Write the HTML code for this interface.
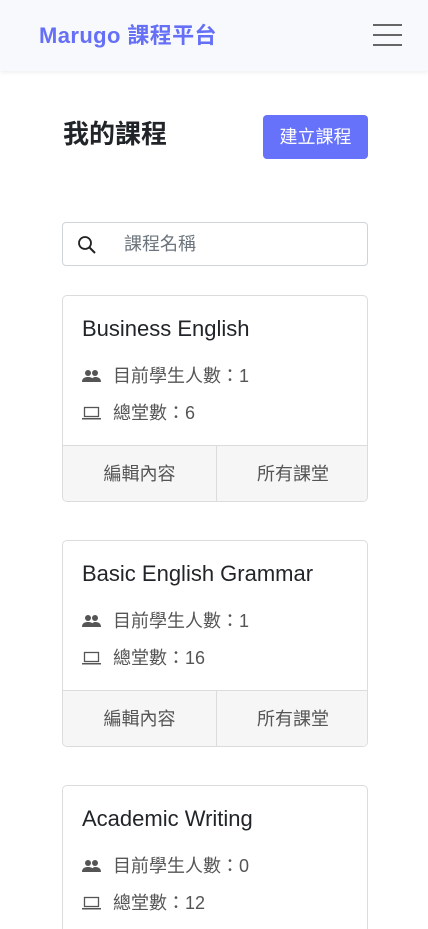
<!DOCTYPE html>
<html><head><meta charset="utf-8">
<style>
*{box-sizing:border-box;margin:0;padding:0}
html,body{width:428px;height:929px;overflow:hidden}
body{background:#fff;font-family:"Liberation Sans","Noto Sans CJK TC",sans-serif;color:#212529;position:relative}
.hdr{position:absolute;left:0;top:0;width:428px;height:71px;background:#f8f9fd;box-shadow:0 2px 4px rgba(0,0,0,.06)}
.brand{position:absolute;left:39px;top:21px;font-size:22px;font-weight:bold;color:#6570f6;line-height:30px;letter-spacing:0.4px}
.ham{position:absolute;left:373px;width:29px;height:2px;background:#666}
h1{position:absolute;left:63px;top:117px;font-size:26px;font-weight:bold;line-height:34px}
.btn{position:absolute;left:263px;top:115px;width:105px;height:44px;background:#6672fa;border-radius:4px;color:#fff;font-size:18px;text-align:center;line-height:44px}
.search{position:absolute;left:62px;top:222px;width:306px;height:44px;border:1px solid #ced4da;border-radius:4px}
.search span{position:absolute;left:61px;top:0;line-height:42px;font-size:18px;color:#6c757d}
.card{position:absolute;left:62px;width:306px;height:207px;border:1px solid #dcdcdc;border-radius:5px;overflow:hidden}
.card .t{position:absolute;left:19px;top:18px;font-size:22px;line-height:30px}
.row{position:absolute;left:19px;font-size:18px;color:#555;line-height:24px}
.row svg{position:absolute;left:0;top:4px}
.row b{font-weight:normal;margin-left:31px}
.foot{position:absolute;left:0;top:149px;width:306px;height:58px;background:#f6f6f6;border-top:1px solid #dcdcdc;font-size:18px;color:#555}
.foot div{position:absolute;top:0;width:153px;text-align:center;line-height:56px}
.foot .r{left:153px;border-left:1px solid #dcdcdc}
</style></head><body>
<div class="hdr">
<div class="brand">Marugo 課程平台</div>
<div class="ham" style="top:24px"></div><div class="ham" style="top:34px"></div><div class="ham" style="top:44px"></div>
</div>
<h1>我的課程</h1>
<div class="btn">建立課程</div>
<div class="search">
<svg style="position:absolute;left:14px;top:12px" width="20" height="20" viewBox="0 0 20 20"><circle cx="8" cy="8" r="6" fill="none" stroke="#222" stroke-width="1.8"/><line x1="12.5" y1="12.5" x2="18" y2="18" stroke="#222" stroke-width="2"/></svg>
<span>課程名稱</span></div>

<div class="card" style="top:295px">
<div class="t">Business English</div>
<div class="row" style="top:68px"><svg width="19" height="16" viewBox="0 0 19 16"><circle cx="6" cy="5" r="3" fill="#555"/><circle cx="13" cy="5" r="3" fill="#555"/><path d="M0 14c0-4 3-5 6-5s6 1 6 5zM9 14c0-4 3-5 4-5 3 0 6 1 6 5z" fill="#555"/></svg><b>目前學生人數：1</b></div>
<div class="row" style="top:105px"><svg width="19" height="16" viewBox="0 0 19 16"><rect x="2.5" y="2.5" width="14" height="9" fill="none" stroke="#555" stroke-width="1.3"/><rect x="0" y="13" width="19" height="1.5" fill="#555"/></svg><b>總堂數：6</b></div>
<div class="foot"><div>編輯內容</div><div class="r">所有課堂</div></div>
</div>

<div class="card" style="top:540px">
<div class="t">Basic English Grammar</div>
<div class="row" style="top:68px"><svg width="19" height="16" viewBox="0 0 19 16"><circle cx="6" cy="5" r="3" fill="#555"/><circle cx="13" cy="5" r="3" fill="#555"/><path d="M0 14c0-4 3-5 6-5s6 1 6 5zM9 14c0-4 3-5 4-5 3 0 6 1 6 5z" fill="#555"/></svg><b>目前學生人數：1</b></div>
<div class="row" style="top:105px"><svg width="19" height="16" viewBox="0 0 19 16"><rect x="2.5" y="2.5" width="14" height="9" fill="none" stroke="#555" stroke-width="1.3"/><rect x="0" y="13" width="19" height="1.5" fill="#555"/></svg><b>總堂數：16</b></div>
<div class="foot"><div>編輯內容</div><div class="r">所有課堂</div></div>
</div>

<div class="card" style="top:785px">
<div class="t">Academic Writing</div>
<div class="row" style="top:68px"><svg width="19" height="16" viewBox="0 0 19 16"><circle cx="6" cy="5" r="3" fill="#555"/><circle cx="13" cy="5" r="3" fill="#555"/><path d="M0 14c0-4 3-5 6-5s6 1 6 5zM9 14c0-4 3-5 4-5 3 0 6 1 6 5z" fill="#555"/></svg><b>目前學生人數：0</b></div>
<div class="row" style="top:105px"><svg width="19" height="16" viewBox="0 0 19 16"><rect x="2.5" y="2.5" width="14" height="9" fill="none" stroke="#555" stroke-width="1.3"/><rect x="0" y="13" width="19" height="1.5" fill="#555"/></svg><b>總堂數：12</b></div>
<div class="foot"><div>編輯內容</div><div class="r">所有課堂</div></div>
</div>
</body></html>
